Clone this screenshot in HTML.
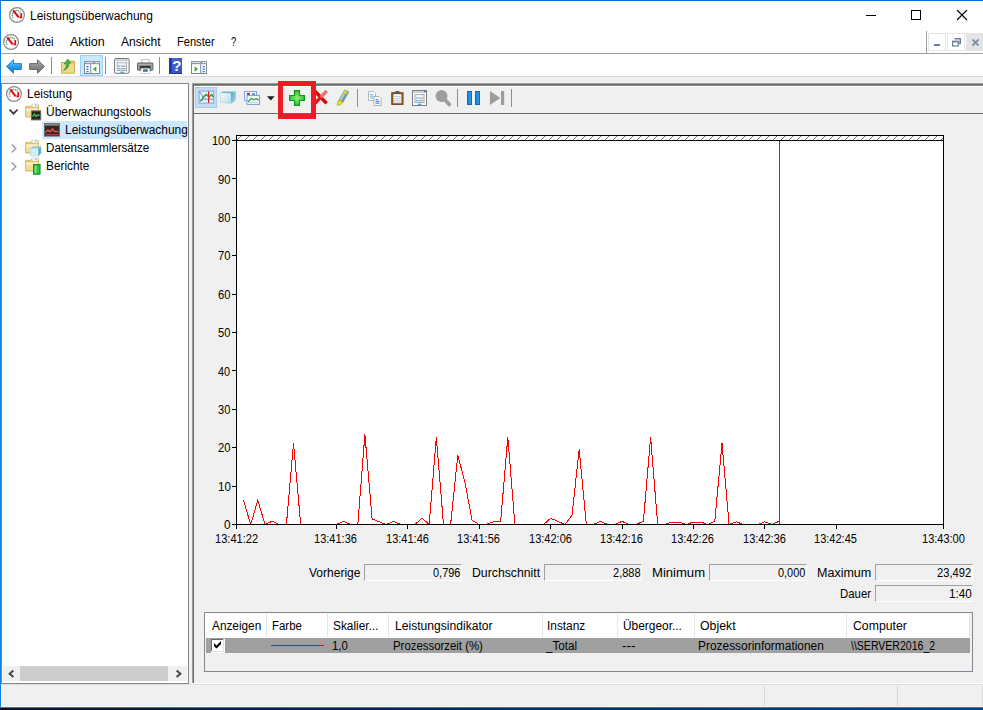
<!DOCTYPE html>
<html lang="de"><head><meta charset="utf-8"><title>Leistungsüberwachung</title>
<style>
*{box-sizing:border-box;margin:0;padding:0}
html,body{width:983px;height:710px;overflow:hidden;background:#f0f0f0}
body{position:relative;font-family:"Liberation Sans",sans-serif;font-size:12px;color:#000;line-height:14px}
.a{position:absolute}
.t{position:absolute;white-space:nowrap;height:14px;line-height:14px}
svg{position:absolute;overflow:visible}
.sep{position:absolute;width:1px;background:#8c8c8c}
.fld{position:absolute;width:98px;height:17px;background:#f0f0f0;border-top:1px solid #a0a0a0;border-left:1px solid #a0a0a0;border-right:1px solid #fff;border-bottom:1px solid #fff}
.hd{position:absolute;top:614px;width:1px;height:23px;background:#e5e5e5}
</style></head><body>
<!-- window frame -->
<div class="a" style="left:0;top:0;width:983px;height:708px;background:#fff;border-left:1px solid #1580d8;border-top:1px solid #0a6fcb"></div>

<!-- title bar icon -->
<svg id="ic1" style="left:9px;top:7px" width="16" height="16" viewBox="0 0 16 16"><circle cx="8" cy="8" r="7.4" fill="#fdfdfd" stroke="#8a8a8a" stroke-width="1.2"/><path d="M4 10.6A4.5 4.5 0 0 1 11.9 5.7" fill="none" stroke="#4f9468" stroke-width="1.5" stroke-dasharray="1.1 0.7"/><path d="M12.3 6V10.4H10.4" fill="none" stroke="#e10a14" stroke-width="1.7"/><path d="M4.2 3.4L9.7 10.4" stroke="#ea0a16" stroke-width="2.1"/></svg>
<!-- caption buttons -->
<div class="a" style="left:866px;top:15px;width:10px;height:1px;background:#000"></div>
<div class="a" style="left:911px;top:10px;width:10px;height:10px;border:1px solid #000"></div>
<svg style="left:957px;top:10px" width="10" height="10" viewBox="0 0 10 10"><path d="M0 0L10 10M10 0L0 10" stroke="#000" stroke-width="1.1"/></svg>

<!-- menu bar -->
<svg id="ic2" style="left:3px;top:34px" width="16" height="16" viewBox="0 0 16 16"><circle cx="8" cy="8" r="7.4" fill="#fdfdfd" stroke="#8a8a8a" stroke-width="1.2"/><path d="M4 10.6A4.5 4.5 0 0 1 11.9 5.7" fill="none" stroke="#4f9468" stroke-width="1.5" stroke-dasharray="1.1 0.7"/><path d="M12.3 6V10.4H10.4" fill="none" stroke="#e10a14" stroke-width="1.7"/><path d="M4.2 3.4L9.7 10.4" stroke="#ea0a16" stroke-width="2.1"/></svg>
<div class="a" style="left:1px;top:53px;width:982px;height:1px;background:#a0a0a0"></div>
<div class="a" style="left:926px;top:31px;width:1px;height:23px;background:#a0a0a0"></div>

<div class="a" style="left:928px;top:33px;width:18px;height:18px;background:#fff;border:1px solid #e5e5e5"></div>
<div class="a" style="left:947px;top:33px;width:18px;height:18px;background:#fff;border:1px solid #e5e5e5"></div>
<div class="a" style="left:966px;top:33px;width:17px;height:18px;background:#e3e3e3"></div>
<div class="a" style="left:934px;top:44px;width:6px;height:2px;background:#6d7f9a"></div>
<svg style="left:952px;top:38px" width="9" height="9" viewBox="0 0 9 9"><path d="M2.5 0.75H8.25V5.5H6.5" fill="none" stroke="#6d7f9a" stroke-width="1.5"/><rect x="0.6" y="3.4" width="5.6" height="4.6" fill="#fff" stroke="#6d7f9a" stroke-width="1.2"/><rect x="0" y="2.8" width="6.8" height="1.6" fill="#6d7f9a"/></svg>
<svg style="left:972px;top:39px" width="7" height="7" viewBox="0 0 7 7"><path d="M0.5 0.5L6.5 6.5M6.5 0.5L0.5 6.5" stroke="#7c90ad" stroke-width="1.8"/></svg>

<!-- toolbar -->
<div class="a" style="left:80px;top:55px;width:23px;height:21px;background:#cce8ff;border:1px solid #99d1ff"></div>
<div class="sep" style="left:51px;top:57px;height:17px"></div>
<div class="sep" style="left:105px;top:57px;height:17px"></div>
<div class="sep" style="left:159px;top:57px;height:17px"></div>
<!-- back arrow -->
<svg style="left:6px;top:59px" width="16" height="15" viewBox="0 0 16 15"><defs><linearGradient id="gb" x1="0" y1="0" x2="0" y2="1"><stop offset="0" stop-color="#7fd0ff"/><stop offset="0.5" stop-color="#2b9cf0"/><stop offset="1" stop-color="#1570c8"/></linearGradient></defs><path d="M0.5 7.5L7.5 0.8V4.6H15.4V10.4H7.5V14.2Z" fill="url(#gb)" stroke="#1a78d0" stroke-width="0.9"/></svg>
<!-- forward arrow -->
<svg style="left:29px;top:59px" width="16" height="15" viewBox="0 0 16 15"><defs><linearGradient id="gg" x1="0" y1="0" x2="0" y2="1"><stop offset="0" stop-color="#b8b8b8"/><stop offset="0.5" stop-color="#8a8a8a"/><stop offset="1" stop-color="#6e6e6e"/></linearGradient></defs><path d="M15.5 7.5L8.5 0.8V4.6H0.6V10.4H8.5V14.2Z" fill="url(#gg)" stroke="#5f5f5f" stroke-width="0.9"/></svg>
<!-- folder up -->
<svg style="left:60px;top:58px" width="16" height="16" viewBox="0 0 16 16"><path d="M1.5 4.5H14.5V15.2H1.5Z" fill="#f3d98c" stroke="#d2ad4f" stroke-width="1"/><path d="M9 3h5.5v2H9z" fill="#e9cf85" stroke="#c9a648" stroke-width="0.8"/><path d="M3.5 12.5C5.8 10.5 6.5 8 6.3 5.6L4 6.2L7.8 1L10.8 5L8.8 5.4C9 8.5 7.2 11.4 3.5 12.5Z" fill="#3db33a" stroke="#2a8f2a" stroke-width="0.6"/></svg>
<!-- show/hide tree -->
<svg style="left:84px;top:61px" width="16" height="13" viewBox="0 0 16 13"><rect x="0.5" y="0.5" width="15" height="12" fill="#fff" stroke="#7b8794" stroke-width="1"/><rect x="0" y="0" width="16" height="3.2" fill="#8d98a5"/><rect x="1.4" y="1" width="8" height="1" fill="#dfe4ea"/><rect x="11.5" y="1" width="1.4" height="1.2" fill="#fff"/><rect x="13.6" y="1" width="1.4" height="1.2" fill="#fff"/><rect x="6.2" y="3.2" width="1" height="9.3" fill="#7b8794"/><rect x="2.4" y="5" width="2.2" height="1.3" fill="#3a78c6"/><rect x="2.4" y="7.5" width="2.2" height="1.3" fill="#3a78c6"/><rect x="2.4" y="10" width="2.2" height="1.3" fill="#3a78c6"/><path d="M12.4 5.2V11L9 8.1Z" fill="#38b030"/></svg>
<!-- properties -->
<svg style="left:114px;top:58px" width="16" height="16" viewBox="0 0 16 16"><rect x="0.5" y="0.5" width="14.6" height="14.8" rx="1.4" fill="#fdfdfd" stroke="#757575" stroke-width="1"/><rect x="1.6" y="1.4" width="12.8" height="1.4" fill="#b5bcc6"/><rect x="3.2" y="4.4" width="9.4" height="8" fill="#f2f5f9" stroke="#9aa3ae" stroke-width="0.9"/><rect x="4.4" y="4" width="3.4" height="1.4" fill="#c3cad3"/><rect x="8.6" y="4" width="3" height="1.4" fill="#c3cad3"/><rect x="4.4" y="7.4" width="1.3" height="1.3" fill="#2d9be8"/><rect x="6.6" y="7.6" width="5" height="1" fill="#8e98a4"/><rect x="4.4" y="10" width="1.3" height="1.3" fill="#2d9be8"/><rect x="6.6" y="10.2" width="5" height="1" fill="#8e98a4"/><rect x="6.4" y="13.6" width="3.4" height="1.5" fill="#26b4ee"/></svg>
<!-- printer -->
<svg style="left:137px;top:58px" width="17" height="16" viewBox="0 0 17 16"><rect x="4.6" y="1.5" width="7.4" height="4.5" fill="#fff" stroke="#bdbdbd" stroke-width="0.9"/><rect x="0.5" y="5" width="15.4" height="7.2" rx="0.6" fill="#6f6f6f" stroke="#555" stroke-width="0.9"/><rect x="1.2" y="5.6" width="14" height="1.8" fill="#b0b0b0"/><rect x="0.9" y="7.4" width="1.6" height="4.2" fill="#a5a5a5"/><rect x="13.9" y="7.4" width="1.6" height="4.2" fill="#a5a5a5"/><rect x="3.2" y="8" width="10" height="2.4" fill="#333"/><path d="M4.4 10.4H12.2L13 15.5H3.6Z" fill="#fff" stroke="#c0c8d4" stroke-width="0.8"/><rect x="6" y="11.2" width="2.2" height="2.6" fill="#2a9d4a"/><rect x="8.2" y="11.2" width="2.4" height="2.6" fill="#2b5fc8"/></svg>
<!-- help -->
<svg style="left:169px;top:58px" width="13" height="16" viewBox="0 0 13 16"><defs><linearGradient id="gh" x1="0" y1="0" x2="1" y2="1"><stop offset="0" stop-color="#4b6ad6"/><stop offset="1" stop-color="#3350c0"/></linearGradient></defs><rect x="0" y="0" width="13" height="16" fill="url(#gh)"/><rect x="0" y="0" width="2.8" height="16" fill="#2338a4"/><rect x="0" y="15" width="13" height="1" fill="#22369c"/><text x="7.8" y="13.2" font-family="Liberation Sans, sans-serif" font-size="15" font-weight="bold" fill="#fff" text-anchor="middle">?</text></svg>
<!-- action pane -->
<svg style="left:191px;top:61px" width="16" height="13" viewBox="0 0 16 13"><rect x="0.5" y="0.5" width="15" height="12" fill="#fff" stroke="#7b8794" stroke-width="1"/><rect x="0" y="0" width="16" height="3.2" fill="#8d98a5"/><rect x="1.4" y="1" width="8" height="1" fill="#dfe4ea"/><rect x="11.5" y="1" width="1.4" height="1.2" fill="#fff"/><rect x="13.6" y="1" width="1.4" height="1.2" fill="#fff"/><rect x="9.2" y="3.2" width="1" height="9.3" fill="#7b8794"/><rect x="11.6" y="5" width="2.2" height="1.3" fill="#3a78c6"/><rect x="11.6" y="7.5" width="2.2" height="1.3" fill="#3a78c6"/><rect x="11.6" y="10" width="2.2" height="1.3" fill="#3a78c6"/><path d="M3.6 5.2V11L7 8.1Z" fill="#38b030"/></svg>

<!-- client area -->
<div class="a" style="left:1px;top:76px;width:982px;height:1px;background:#dcdcdc"></div>
<div class="a" style="left:1px;top:77px;width:982px;height:629px;background:#f0f0f0"></div>

<!-- tree panel -->
<div class="a" id="tree" style="left:1px;top:83px;width:188px;height:601px;background:#fff;border:1px solid #828790"></div>
<div class="a" style="left:42px;top:121px;width:145px;height:18px;background:#cce8ff"></div>
<svg id="ic3" style="left:6px;top:86px" width="16" height="16" viewBox="0 0 16 16"><circle cx="8" cy="8" r="7.4" fill="#fdfdfd" stroke="#8a8a8a" stroke-width="1.2"/><path d="M4 10.6A4.5 4.5 0 0 1 11.9 5.7" fill="none" stroke="#4f9468" stroke-width="1.5" stroke-dasharray="1.1 0.7"/><path d="M12.3 6V10.4H10.4" fill="none" stroke="#e10a14" stroke-width="1.7"/><path d="M4.2 3.4L9.7 10.4" stroke="#ea0a16" stroke-width="2.1"/></svg>
<!-- chevrons -->
<svg style="left:9px;top:109px" width="9" height="6" viewBox="0 0 9 6"><path d="M0.5 0.7L4.5 4.7L8.5 0.7" fill="none" stroke="#3a3a3a" stroke-width="1.7"/></svg>
<svg style="left:11px;top:144px" width="6" height="9" viewBox="0 0 6 9"><path d="M0.8 0.5L4.8 4.5L0.8 8.5" fill="none" stroke="#a0a0a0" stroke-width="1.6"/></svg>
<svg style="left:11px;top:162px" width="6" height="9" viewBox="0 0 6 9"><path d="M0.8 0.5L4.8 4.5L0.8 8.5" fill="none" stroke="#a0a0a0" stroke-width="1.6"/></svg>
<!-- folder icons -->
<svg style="left:25px;top:103px" width="16" height="18" viewBox="0 0 16 18"><path d="M0.6 3.4H6L7.2 1.4H13.4V13.8H0.6Z" fill="#f4dea0" stroke="#dcbd68" stroke-width="1"/><rect x="7.6" y="0.9" width="5.2" height="3" fill="#fff" stroke="#d9d9d9" stroke-width="0.4"/><rect x="9.6" y="1.5" width="2.2" height="1" fill="#4aa0e6"/><path d="M0.6 4.6H13.4V13.8H0.6Z" fill="#f3dc98" stroke="#dcbd68" stroke-width="1"/><rect x="1.3" y="5.3" width="11.4" height="3" fill="#f9ecc0"/><rect x="6.5" y="7.9" width="9.2" height="9" fill="#262626" stroke="#6d6d6d" stroke-width="1"/><path d="M7.6 13.6L9.4 11L11 13.6L12.4 12L14.6 12.4" fill="none" stroke="#44d24a" stroke-width="1.2"/></svg>
<svg style="left:25px;top:139px" width="16" height="18" viewBox="0 0 16 18"><path d="M0.6 3.4H6L7.2 1.4H13.4V13.8H0.6Z" fill="#f4dea0" stroke="#dcbd68" stroke-width="1"/><rect x="7.6" y="0.9" width="5.2" height="3" fill="#fff" stroke="#d9d9d9" stroke-width="0.4"/><rect x="9.6" y="1.5" width="2.2" height="1" fill="#4aa0e6"/><path d="M0.6 4.6H13.4V13.8H0.6Z" fill="#f3dc98" stroke="#dcbd68" stroke-width="1"/><rect x="1.3" y="5.3" width="11.4" height="3" fill="#f9ecc0"/><path d="M5.4 9.4L8 7.8H15.8V14L13.4 17H5.4Z" fill="#8fcbe4" stroke="#74b8d6" stroke-width="0.5"/><path d="M5.4 9.4H13.4V17H5.4Z" fill="#d4ecf6"/><path d="M13.4 9.4L15.8 7.8V14L13.4 17Z" fill="#5aa9cb"/></svg>
<svg style="left:25px;top:157px" width="16" height="18" viewBox="0 0 16 18"><path d="M0.6 3.4H6L7.2 1.4H13.4V13.8H0.6Z" fill="#f4dea0" stroke="#dcbd68" stroke-width="1"/><rect x="7.6" y="0.9" width="5.2" height="3" fill="#fff" stroke="#d9d9d9" stroke-width="0.4"/><rect x="9.6" y="1.5" width="2.2" height="1" fill="#4aa0e6"/><path d="M0.6 4.6H13.4V13.8H0.6Z" fill="#f3dc98" stroke="#dcbd68" stroke-width="1"/><rect x="1.3" y="5.3" width="11.4" height="3" fill="#f9ecc0"/><rect x="8.6" y="7.6" width="6.4" height="9.6" fill="#2ec83a" stroke="#178a26" stroke-width="1.1"/><rect x="9.6" y="8.6" width="2" height="7.6" fill="#6fe878"/></svg>
<!-- perfmon node icon -->
<svg style="left:44px;top:123px" width="16" height="14" viewBox="0 0 16 14"><rect x="0.5" y="0.5" width="15" height="12.6" fill="#2a2a2a" stroke="#6f6f6f" stroke-width="1"/><rect x="1" y="1" width="14" height="1.6" fill="#8c8c8c"/><path d="M1.5 9.5L4 7L6 9L8.5 6L10.5 8.6L14.5 8.6" fill="none" stroke="#ff4646" stroke-width="1.5"/><path d="M1.5 11.5H14.5" stroke="#c43a3a" stroke-width="1"/></svg>
<!-- tree scrollbar -->
<div class="a" style="left:3px;top:666px;width:184px;height:15px;background:#f0f0f0"></div>
<div class="a" style="left:20px;top:666px;width:148px;height:15px;background:#cdcdcd"></div>
<svg style="left:8px;top:670px" width="6" height="8" viewBox="0 0 6 8"><path d="M5.4 0.4L1.6 3.7L5.4 7" fill="none" stroke="#484848" stroke-width="2"/></svg>
<svg style="left:176px;top:670px" width="6" height="8" viewBox="0 0 6 8"><path d="M0.6 0.4L4.4 3.7L0.6 7" fill="none" stroke="#484848" stroke-width="2"/></svg>

<!-- right panel borders -->
<div class="a" style="left:192px;top:83px;width:791px;height:1px;background:#a0a0a0"></div>
<div class="a" style="left:192px;top:83px;width:1px;height:600px;background:#a0a0a0"></div>
<div class="a" style="left:193px;top:84px;width:790px;height:1px;background:#696969"></div>
<div class="a" style="left:193px;top:84px;width:1px;height:599px;background:#696969"></div>
<div class="a" style="left:192px;top:683px;width:791px;height:1px;background:#fff"></div>
<div class="a" style="left:194px;top:113px;width:789px;height:1px;background:#696969"></div>
<div class="a" style="left:194px;top:85px;width:789px;height:1px;background:#8c8c8c"></div>
<div class="a" style="left:194px;top:86px;width:789px;height:1px;background:#fff"></div>

<!-- inner toolbar -->
<div class="a" style="left:195px;top:87px;width:22px;height:21px;background:#c3ddf2;border:1px solid #a8cbf4"></div>
<div class="sep" style="left:357px;top:89px;height:18px;background:#8d8d8d"></div>
<div class="sep" style="left:457px;top:89px;height:18px;background:#8d8d8d"></div>
<div class="sep" style="left:511px;top:89px;height:18px;background:#8d8d8d"></div>
<!-- ti1 graph icon -->
<svg style="left:199px;top:90px" width="16" height="14" viewBox="0 0 16 14"><rect x="0.1" y="1.1" width="14.6" height="12" fill="#eef4fd" stroke="#7d9ad8" stroke-width="0.9"/><path d="M3.5 1.5V12.5M6.5 1.5V12.5M12.5 1.5V12.5" stroke="#d3def4" stroke-width="0.7"/><path d="M0.4 1.4L5.2 9.2H14.4" fill="none" stroke="#5b7fd0" stroke-width="0.9"/><path d="M0.8 11L3 9.8L5 6.2L7.5 4.5L10 7L12.5 4.5L14.6 7" fill="none" stroke="#33a83c" stroke-width="1.7" stroke-linejoin="round"/><rect x="9" y="1.4" width="1.3" height="11.6" fill="#e32222"/></svg>
<!-- ti2 cube -->
<svg style="left:220px;top:91px" width="16" height="13" viewBox="0 0 16 13"><defs><linearGradient id="gc" x1="0" y1="0" x2="1" y2="1"><stop offset="0" stop-color="#ffffff"/><stop offset="1" stop-color="#a9d9ea"/></linearGradient><linearGradient id="gc2" x1="0" y1="0" x2="1" y2="1"><stop offset="0" stop-color="#4a9fc2"/><stop offset="1" stop-color="#b5deec"/></linearGradient></defs><path d="M0.6 1.8L11 2.2V12.4L0.6 11.4Z" fill="url(#gc)" stroke="#a6d3e6" stroke-width="0.6"/><path d="M0.6 1.8L3 0.4H15.8L11 2.2Z" fill="#6fb7d3"/><path d="M11 2.2L15.8 0.4V9.6L11 12.4Z" fill="url(#gc2)"/></svg>
<!-- ti3 source -->
<svg style="left:244px;top:91px" width="16" height="14" viewBox="0 0 16 14"><rect x="0.5" y="0.5" width="12" height="9" fill="#eef3fb" stroke="#8aa3d6" stroke-width="1"/><rect x="3" y="2" width="3" height="1.8" fill="#a02020"/><rect x="8" y="2.4" width="3" height="1.4" fill="#3f74cc"/><rect x="3" y="4.4" width="12.5" height="9" fill="#f6f9fe" stroke="#7f9bd3" stroke-width="1"/><path d="M4 11.5H14.5" stroke="#b6c7ea" stroke-width="0.8"/><path d="M4 10.5C5.5 10.5 6 7.5 7.5 7.5S9 9.5 10.5 8.5S12.5 7 14.5 9.5" fill="none" stroke="#3bb04a" stroke-width="1.4"/></svg>
<svg style="left:267px;top:96px" width="8" height="5" viewBox="0 0 8 5"><path d="M0 0.3H7.6L3.8 4.4Z" fill="#1a1a1a"/></svg>
<!-- plus -->
<svg style="left:289px;top:90px" width="16" height="16" viewBox="0 0 16 16"><defs><radialGradient id="gp" cx="0.5" cy="0.5" r="0.6"><stop offset="0" stop-color="#8cf07a"/><stop offset="1" stop-color="#22b428"/></radialGradient></defs><path d="M5.5 0.6H10.5V5.5H15.4V10.5H10.5V15.4H5.5V10.5H0.6V5.5H5.5Z" fill="url(#gp)" stroke="#0f9a18" stroke-width="1.2"/></svg>
<!-- red x -->
<svg style="left:313px;top:90px" width="15" height="14" viewBox="0 0 15 14"><path d="M2 1.2L13.6 13.4" stroke="#d40a0a" stroke-width="3.5"/><path d="M13.8 1L7.6 7.4" stroke="#f07070" stroke-width="3.4"/><path d="M7.8 7.2L2 13.4" stroke="#e01818" stroke-width="3.4"/></svg>
<!-- highlighter -->
<svg style="left:336px;top:89px" width="14" height="17" viewBox="0 0 14 17"><path d="M8.6 0.8L12.8 3L7 13.2L3 11Z" fill="#a9c6d2" stroke="#6f909f" stroke-width="0.6"/><path d="M10.8 2L12.8 3L7 13.2L5.4 12.2Z" fill="#6e98aa"/><path d="M8.8 1.6L11.6 3.2L10.4 5.4L7.6 3.8Z" fill="#e0d816"/><path d="M3 11L7 13.2L4.8 15.6L1.4 16.4L1.6 13.2Z" fill="#ece41c" stroke="#a8a010" stroke-width="0.7"/></svg>
<!-- copy -->
<svg style="left:368px;top:91px" width="14" height="15" viewBox="0 0 14 15"><path d="M0.5 0.5H5.5L7.5 2.5V9.5H0.5Z" fill="#fff" stroke="#b0b0b0" stroke-width="0.9"/><path d="M2 3.4H5M2 5.2H6M2 7H6" stroke="#6aa6dc" stroke-width="0.9"/><path d="M6 5.5H11L13.2 7.7V14.5H6Z" fill="#fff" stroke="#a8a8a8" stroke-width="0.9"/><path d="M7.6 8.6H10.4M7.6 10.4H11.6M7.6 12.2H11.6" stroke="#2f7fd0" stroke-width="1"/></svg>
<!-- paste -->
<svg style="left:391px;top:91px" width="13" height="14" viewBox="0 0 13 14"><rect x="0.8" y="1.8" width="11.2" height="11.6" fill="#9a5c1c" stroke="#7b4613" stroke-width="1.1"/><rect x="2.4" y="3.2" width="8" height="9" fill="#fff"/><rect x="3.6" y="0.6" width="5.6" height="2.4" fill="#5a5a5a"/><rect x="4.8" y="0" width="3.2" height="1.2" fill="#5a5a5a"/><path d="M3 5.4H9.8M3 7.4H9.8M3 9.4H9.8M3 11.2H9.8" stroke="#a8c8e8" stroke-width="0.9"/></svg>
<!-- properties 2 -->
<svg style="left:412px;top:90px" width="15" height="16" viewBox="0 0 15 16"><rect x="0.5" y="0.5" width="14" height="15" fill="#fdfdfd" stroke="#7e7e7e" stroke-width="1"/><rect x="1.4" y="1.4" width="12.2" height="1.4" fill="#b5bcc6"/><rect x="12" y="0.8" width="1.6" height="1.4" fill="#3a6ac0"/><rect x="3" y="4.6" width="9" height="8" fill="#f2f5f9" stroke="#9aa3ae" stroke-width="0.9"/><rect x="4.2" y="7.4" width="1.3" height="1.3" fill="#2d9be8"/><rect x="6.2" y="7.6" width="4.8" height="1" fill="#8e98a4"/><rect x="4.2" y="10" width="1.3" height="1.3" fill="#2d9be8"/><rect x="6.2" y="10.2" width="4.8" height="1" fill="#8e98a4"/><rect x="6" y="13.6" width="3.4" height="1.5" fill="#26b4ee"/></svg>
<!-- magnifier -->
<svg style="left:435px;top:90px" width="16" height="16" viewBox="0 0 16 16"><circle cx="6.5" cy="6" r="6" fill="#9d9d9d"/><path d="M10 9.8L14.2 14.4" stroke="#9d9d9d" stroke-width="3.8" stroke-linecap="round"/></svg>
<!-- pause -->
<div class="a" style="left:467px;top:91px;width:5px;height:14px;background:linear-gradient(90deg,#1a80d8,#2aa0f0);border:1px solid #1668c0"></div>
<div class="a" style="left:475px;top:91px;width:5px;height:14px;background:linear-gradient(90deg,#1a80d8,#2aa0f0);border:1px solid #1668c0"></div>
<!-- step -->
<svg style="left:490px;top:91px" width="15" height="14" viewBox="0 0 15 14"><path d="M0 0L10.4 7L0 14Z" fill="#9d9d9d"/><rect x="11" y="0" width="3.2" height="14" fill="#9d9d9d"/></svg>
<!-- red highlight box -->
<div class="a" style="left:278px;top:81px;width:38px;height:38px;border:5px solid #ed1c24"></div>

<!-- chart -->
<svg style="left:0;top:0" width="983" height="710" viewBox="0 0 983 710">
<defs><pattern id="hatch" x="234" y="135" width="8" height="8" patternUnits="userSpaceOnUse"><path d="M-1 9L9 -1M-1 1L1 -1M7 9L9 7" stroke="#111" stroke-width="0.65"/></pattern></defs>
<rect x="236.5" y="135.5" width="707" height="389" fill="#fff" stroke="#000" stroke-width="1" shape-rendering="crispEdges"/>
<rect x="237" y="136" width="706" height="4" fill="url(#hatch)"/>
<path d="M236 140.5H944" stroke="#000" stroke-width="1" shape-rendering="crispEdges"/>
<g stroke="#000" stroke-width="1" shape-rendering="crispEdges">
<path d="M232 140.5H236M232 178.5H236M232 217.5H236M232 255.5H236M232 294.5H236M232 332.5H236M232 370.5H236M232 409.5H236M232 447.5H236M232 486.5H236M232 524.5H236"/>
<path d="M236.5 525V529M336.5 525V529M407.5 525V529M479.5 525V529M550.5 525V529M622.5 525V529M693.5 525V529M764.5 525V529M836.5 525V529M943.5 525V529"/>
</g>
<clipPath id="cpl"><rect x="237" y="136" width="706" height="389"/></clipPath>
<polyline points="243.5,500.3 250.7,524.5 257.8,500.3 265.0,524.5 272.1,521.3 279.2,524.5 286.4,524.5 293.5,443.3 300.7,524.5 307.8,524.5 315.0,524.5 322.1,524.5 329.2,524.5 336.4,524.5 343.5,521.3 350.7,524.5 357.8,524.5 364.9,434.3 372.1,518.8 379.2,521.8 386.4,524.5 393.5,521.3 400.6,524.5 407.8,524.5 414.9,524.5 422.1,518.3 429.2,524.5 436.3,437.3 443.5,524.5 450.6,524.5 457.8,455.3 464.9,482.3 472.1,520.3 479.2,524.5 486.3,524.5 493.5,521.7 500.6,521.7 507.8,437.3 514.9,524.5 522.0,524.5 529.2,524.5 536.3,524.5 543.5,524.5 550.6,518.3 557.7,521.3 564.9,524.5 572.0,515.3 579.2,449.3 586.3,524.5 593.5,524.5 600.6,521.3 607.7,524.5 614.9,524.5 622.0,521.3 629.2,524.5 636.3,524.5 643.4,521.3 650.6,437.3 657.7,524.5 664.9,524.5 672.0,522.0 679.1,522.0 686.3,524.5 693.4,522.0 700.6,522.0 707.7,524.5 714.8,521.3 722.0,443.3 729.1,524.5 736.3,521.8 743.4,524.5 750.6,524.5 757.7,524.5 764.8,521.8 772.0,524.5 779.1,521.3" fill="none" stroke="#ff0000" stroke-width="1" shape-rendering="crispEdges" clip-path="url(#cpl)"/>
<path d="M779.5 141V524" stroke="#ff0000" stroke-width="1" shape-rendering="crispEdges"/>
<path d="M236 524.5H944" stroke="#000" stroke-width="1" shape-rendering="crispEdges"/>
</svg>

<!-- stat fields -->
<div class="fld" style="left:364px;top:564px"></div>
<div class="fld" style="left:544px;top:564px"></div>
<div class="fld" style="left:709px;top:564px"></div>
<div class="fld" style="left:875px;top:564px"></div>
<div class="fld" style="left:875px;top:585px"></div>

<!-- list -->
<div class="a" style="left:204px;top:612px;width:769px;height:60px;background:#f0f0f0;border:1px solid #828790"></div>
<div class="a" style="left:205px;top:613px;width:765px;height:25px;background:#fff"></div>
<div class="hd" style="left:266px"></div><div class="hd" style="left:327px"></div><div class="hd" style="left:388px"></div><div class="hd" style="left:542px"></div><div class="hd" style="left:617px"></div><div class="hd" style="left:694px"></div><div class="hd" style="left:846px"></div><div class="hd" style="left:969px"></div>
<div class="a" style="left:206px;top:638px;width:764px;height:15px;background:#a0a0a0"></div>
<div class="a" style="left:211px;top:639px;width:14px;height:14px;background:#fff"></div>
<div class="a" style="left:211px;top:639px;width:13px;height:13px;background:#e3e3e3"></div>
<div class="a" style="left:211px;top:639px;width:12px;height:12px;background:#696969"></div>
<div class="a" style="left:212px;top:640px;width:11px;height:11px;background:#fff"></div>
<svg style="left:214px;top:641px" width="7" height="8" viewBox="0 0 7 8"><path d="M0 2L2.5 4.5L7 0V3L2.5 7.5L0 5Z" fill="#000"/></svg>
<div class="a" style="left:271px;top:645px;width:53px;height:1px;background:#ff0000"></div>

<!-- status bar -->
<div class="a" style="left:764px;top:686px;width:1px;height:20px;background:#d7d7d7"></div>
<div class="a" style="left:897px;top:686px;width:1px;height:20px;background:#d7d7d7"></div>
<div class="a" style="left:982px;top:686px;width:1px;height:20px;background:#d7d7d7"></div>
<div class="a" style="left:1px;top:684px;width:982px;height:1px;background:#dfdfdf"></div>
<div class="a" style="left:1px;top:684px;width:1px;height:23px;background:#fcf6ef"></div>
<div class="a" style="left:1px;top:706px;width:982px;height:1px;background:#fcf6ef"></div>
<div class="a" style="left:0;top:707px;width:983px;height:1px;background:#1780d8"></div>
<div class="a" style="left:0;top:708px;width:983px;height:1px;background:linear-gradient(90deg,#051a3a,#08498f)"></div>
<div class="a" style="left:0;top:709px;width:983px;height:1px;background:linear-gradient(90deg,#040f25,#033a74)"></div>

<div class="t" id="t0" style="left:29.50px;top:8.8px;transform-origin:0 0;transform:scaleX(0.9955);">Leistungsüberwachung</div>
<div class="t" id="t1" style="left:26.55px;top:34.8px;transform-origin:0 0;transform:scaleX(0.9489);">Datei</div>
<div class="t" id="t2" style="left:69.60px;top:34.8px;transform-origin:0 0;transform:scaleX(1.0406);">Aktion</div>
<div class="t" id="t3" style="left:120.80px;top:34.8px;transform-origin:0 0;transform:scaleX(1.0046);">Ansicht</div>
<div class="t" id="t4" style="left:176.67px;top:34.8px;transform-origin:0 0;transform:scaleX(0.9246);">Fenster</div>
<div class="t" id="t5" style="left:230.69px;top:34.8px;transform-origin:0 0;transform:scaleX(0.7797);">?</div>
<div class="t" id="t6" style="left:26.61px;top:86.8px;transform-origin:0 0;transform:scaleX(0.9932);">Leistung</div>
<div class="t" id="t7" style="left:45.50px;top:104.8px;transform-origin:0 0;transform:scaleX(0.9962);">Überwachungstools</div>
<div class="t" id="t8" style="left:64.60px;top:122.8px;transform-origin:0 0;transform:scaleX(0.9955);">Leistungsüberwachung</div>
<div class="t" id="t9" style="left:45.53px;top:140.8px;transform-origin:0 0;transform:scaleX(0.9684);">Datensammlersätze</div>
<div class="t" id="t10" style="left:45.51px;top:158.8px;transform-origin:0 0;transform:scaleX(0.9848);">Berichte</div>
<div class="t" id="t11" style="left:212.17px;top:134.2px;transform-origin:0 0;transform:scaleX(0.9174);">100</div>
<div class="t" id="t12" style="left:218.14px;top:172.6px;transform-origin:0 0;transform:scaleX(0.9299);">90</div>
<div class="t" id="t13" style="left:218.14px;top:211.0px;transform-origin:0 0;transform:scaleX(0.9299);">80</div>
<div class="t" id="t14" style="left:218.04px;top:249.4px;transform-origin:0 0;transform:scaleX(0.9375);">70</div>
<div class="t" id="t15" style="left:218.04px;top:287.8px;transform-origin:0 0;transform:scaleX(0.9375);">60</div>
<div class="t" id="t16" style="left:218.23px;top:326.2px;transform-origin:0 0;transform:scaleX(0.9226);">50</div>
<div class="t" id="t17" style="left:218.42px;top:364.6px;transform-origin:0 0;transform:scaleX(0.9081);">40</div>
<div class="t" id="t18" style="left:218.23px;top:403.0px;transform-origin:0 0;transform:scaleX(0.9226);">30</div>
<div class="t" id="t19" style="left:218.04px;top:441.4px;transform-origin:0 0;transform:scaleX(0.9375);">20</div>
<div class="t" id="t20" style="left:217.74px;top:479.8px;transform-origin:0 0;transform:scaleX(0.9608);">10</div>
<div class="t" id="t21" style="left:224.01px;top:518.2px;transform-origin:0 0;transform:scaleX(0.9831);">0</div>
<div class="t" id="t22" style="left:214.82px;top:532.0px;transform-origin:0 0;transform:scaleX(0.9218);">13:41:22</div>
<div class="t" id="t23" style="left:314.32px;top:532.0px;transform-origin:0 0;transform:scaleX(0.9198);">13:41:36</div>
<div class="t" id="t24" style="left:385.82px;top:532.0px;transform-origin:0 0;transform:scaleX(0.9198);">13:41:46</div>
<div class="t" id="t25" style="left:457.32px;top:532.0px;transform-origin:0 0;transform:scaleX(0.9198);">13:41:56</div>
<div class="t" id="t26" style="left:528.62px;top:532.0px;transform-origin:0 0;transform:scaleX(0.9198);">13:42:06</div>
<div class="t" id="t27" style="left:600.02px;top:532.0px;transform-origin:0 0;transform:scaleX(0.9198);">13:42:16</div>
<div class="t" id="t28" style="left:671.32px;top:532.0px;transform-origin:0 0;transform:scaleX(0.9198);">13:42:26</div>
<div class="t" id="t29" style="left:742.82px;top:532.0px;transform-origin:0 0;transform:scaleX(0.9198);">13:42:36</div>
<div class="t" id="t30" style="left:814.12px;top:532.0px;transform-origin:0 0;transform:scaleX(0.9198);">13:42:45</div>
<div class="t" id="t31" style="left:921.62px;top:532.0px;transform-origin:0 0;transform:scaleX(0.9178);">13:43:00</div>
<div class="t" id="t32" style="left:309.40px;top:565.8px;transform-origin:0 0;transform:scaleX(1.0021);">Vorherige</div>
<div class="t" id="t33" style="left:471.58px;top:565.8px;transform-origin:0 0;transform:scaleX(1.0219);">Durchschnitt</div>
<div class="t" id="t34" style="left:651.82px;top:565.8px;transform-origin:0 0;transform:scaleX(1.0898);">Minimum</div>
<div class="t" id="t35" style="left:817.06px;top:565.8px;transform-origin:0 0;transform:scaleX(1.0435);">Maximum</div>
<div class="t" id="t36" style="left:839.75px;top:586.8px;transform-origin:0 0;transform:scaleX(0.9497);">Dauer</div>
<div class="t" id="t37" style="left:433.34px;top:565.8px;transform-origin:0 0;transform:scaleX(0.9124);">0,796</div>
<div class="t" id="t38" style="left:613.15px;top:565.8px;transform-origin:0 0;transform:scaleX(0.9187);">2,888</div>
<div class="t" id="t39" style="left:778.24px;top:565.8px;transform-origin:0 0;transform:scaleX(0.9092);">0,000</div>
<div class="t" id="t40" style="left:937.44px;top:565.8px;transform-origin:0 0;transform:scaleX(0.9288);">23,492</div>
<div class="t" id="t41" style="left:948.62px;top:586.8px;transform-origin:0 0;transform:scaleX(0.9737);">1:40</div>
<div class="t" id="t42" style="left:212.40px;top:619.0px;transform-origin:0 0;transform:scaleX(0.9845);">Anzeigen</div>
<div class="t" id="t43" style="left:272.34px;top:619.0px;transform-origin:0 0;transform:scaleX(0.9542);">Farbe</div>
<div class="t" id="t44" style="left:333.21px;top:619.0px;transform-origin:0 0;transform:scaleX(0.9868);">Skalier...</div>
<div class="t" id="t45" style="left:394.59px;top:619.0px;transform-origin:0 0;transform:scaleX(1.0091);">Leistungsindikator</div>
<div class="t" id="t46" style="left:547.01px;top:619.0px;transform-origin:0 0;transform:scaleX(0.9868);">Instanz</div>
<div class="t" id="t47" style="left:623.41px;top:619.0px;transform-origin:0 0;transform:scaleX(0.9925);">Übergeor...</div>
<div class="t" id="t48" style="left:699.59px;top:619.0px;transform-origin:0 0;transform:scaleX(1.0250);">Objekt</div>
<div class="t" id="t49" style="left:853.29px;top:619.0px;transform-origin:0 0;transform:scaleX(1.0214);">Computer</div>
<div class="t" id="t50" style="left:331.75px;top:638.8px;transform-origin:0 0;transform:scaleX(0.9411);">1,0</div>
<div class="t" id="t51" style="left:392.65px;top:638.8px;transform-origin:0 0;transform:scaleX(0.9496);">Prozessorzeit (%)</div>
<div class="t" id="t52" style="left:546.19px;top:638.8px;transform-origin:0 0;transform:scaleX(0.9728);">_Total</div>
<div class="t" id="t53" style="left:622.44px;top:638.8px;transform-origin:0 0;transform:scaleX(1.1281);">---</div>
<div class="t" id="t54" style="left:698.01px;top:638.8px;transform-origin:0 0;transform:scaleX(0.9932);">Prozessorinformationen</div>
<div class="t" id="t55" style="left:851.30px;top:638.8px;transform-origin:0 0;transform:scaleX(0.8775);">\\SERVER2016_2</div>
</body></html>
